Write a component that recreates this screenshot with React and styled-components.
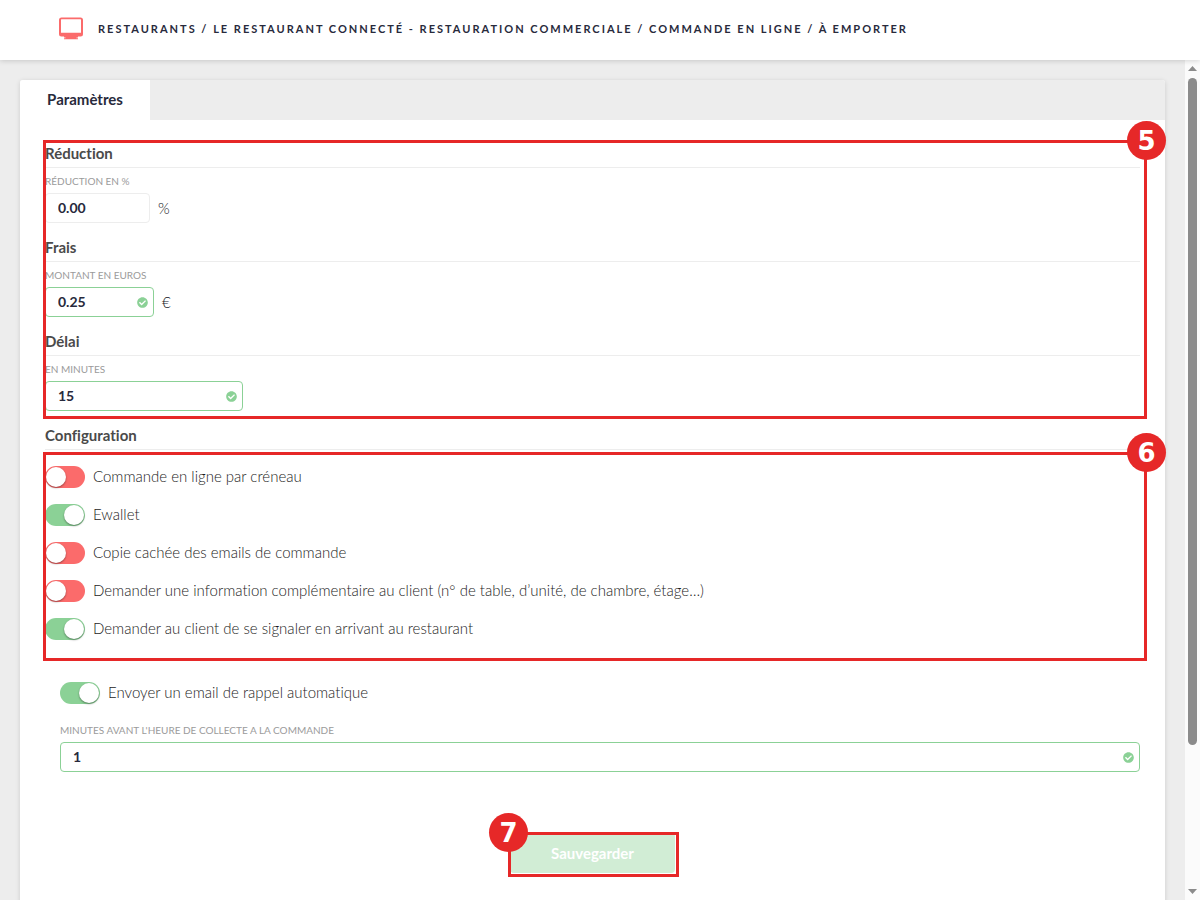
import React, { useState } from "react";
import styled, { createGlobalStyle } from "styled-components";
import { FaCheckCircle } from "react-icons/fa";

const GlobalStyle = createGlobalStyle`
    *, *::before, *::after {
        box-sizing: border-box;
    }
    body {
        margin: 0;
        background: #ededed;
        color: #282a3c;
        font-family: Lato, "Liberation Sans", sans-serif;
        font-size: 15px;
        font-variant-ligatures: none;
    }
    button, input {
        font-family: inherit;
    }
`;

const Page = styled.div`
    display: flex;
    flex-direction: column;
    height: 100vh;
`;
const Header = styled.header`
    position: relative;
    z-index: 1;
    flex: none;
    display: flex;
    align-items: center;
    gap: 14px;
    height: 60px;
    padding: 0 58px 3px;
    background: #fff;
    box-shadow: 0 1px 5px rgba(0, 0, 0, 0.16);
`;
const Breadcrumb = styled.h1`
    margin: 0;
    font-size: 11px;
    line-height: 16px;
    font-weight: 700;
    letter-spacing: 2px;
    text-transform: uppercase;
    white-space: nowrap;
`;
const Body = styled.div`
    flex: 1;
    display: flex;
    min-height: 0;
`;
const Main = styled.main`
    flex: 1;
    min-width: 0;
    padding: 20px;
    overflow: hidden;
`;
const Card = styled.div`
    background: #fff;
    border-radius: 3px;
    box-shadow: 0 1px 5px rgba(0, 0, 0, 0.14);
`;
const Tabs = styled.div`
    display: flex;
    height: 40px;
    background: #ededed;
    border-radius: 3px 3px 0 0;
`;
const Tab = styled.button`
    min-width: 130px;
    padding: 0 20px 2px;
    border: 0;
    border-radius: 3px 0 0 0;
    background: #fff;
    color: #282a3c;
    font-size: 15px;
    font-weight: 700;
`;
const Form = styled.form`
    padding: 20px 25px 60px;
`;
const Group = styled.div`
    position: relative;
`;
const Toggles = styled(Group)`
    padding: 8px 0 13px;
`;
const Section = styled.section`
    padding-bottom: 11px;
`;
const SectionTitle = styled.h2`
    margin: 0;
    height: 28px;
    border-bottom: 1px solid #ededed;
    color: #4a4a4a;
    font-size: 15px;
    line-height: 26px;
    font-weight: 700;
`;
const FieldLabel = styled.label`
    display: block;
    margin: 6px 0 5px;
    color: #9b9b9b;
    font-size: 10px;
    line-height: 14px;
    text-transform: uppercase;
`;
const FieldRow = styled.div`
    display: flex;
    align-items: center;
    gap: 8px;
`;
const Unit = styled.span`
    padding-bottom: 1px;
    color: #14151e;
    font-weight: 300;
`;
const InputBox = styled.div`
    display: flex;
    align-items: center;
    width: ${props => props.$width || "100%"};
    height: 30px;
    padding: 0 5px 0 12px;
    border: 1px solid ${props => (props.$valid ? "#8bd196" : "#ededed")};
    border-radius: 4px;
    background: #fff;
    color: #8bd196;
`;
const Input = styled.input`
    flex: 1;
    min-width: 0;
    height: 20px;
    padding: 0 0 2px;
    border: 0;
    outline: 0;
    background: transparent;
    color: #282a3c;
    font-size: 14px;
    font-weight: 700;
`;
const ToggleRow = styled.label`
    display: flex;
    align-items: center;
    gap: 8px;
    height: 38px;
    color: #1c1c1c;
    font-weight: 300;
    cursor: pointer;
`;
const ToggleText = styled.span`
    padding-bottom: 2px;
`;
const Switch = styled.input`
    appearance: none;
    display: flex;
    flex: none;
    width: 40px;
    height: 22px;
    margin: 0;
    padding: 1px;
    border-radius: 11px;
    background: #fb6b6b;
    cursor: pointer;

    &::before {
        content: "";
        width: 20px;
        height: 20px;
        border-radius: 50%;
        background: #fff;
        box-shadow: 0 1px 2px rgba(0, 0, 0, 0.4);
    }
    &:checked {
        justify-content: flex-end;
        background: #8bd196;
    }
`;
const Reminder = styled.div`
    padding: 13px 0 0 15px;

    ${FieldLabel} {
        margin-top: 11px;
    }
`;
const Actions = styled.div`
    display: flex;
    justify-content: center;
    padding-top: 61px;
`;
const SaveButton = styled.button`
    display: block;
    width: 165px;
    height: 40px;
    padding: 0 0 1px;
    border: 0;
    border-radius: 4px;
    background: #d1edd5;
    color: #fff;
    font-size: 15px;
    font-weight: 700;
`;
const Frame = styled.div`
    position: absolute;
    inset: ${props => props.$inset};
    border: 3px solid #e62828;
    pointer-events: none;
`;
const Badge = styled.span`
    position: absolute;
    top: -22px;
    ${props => props.$side}: -22px;
    display: flex;
    align-items: center;
    justify-content: center;
    width: 39px;
    height: 39px;
    border-radius: 50%;
    background: #e62828;
    color: #fff;
    font-family: "DejaVu Sans", sans-serif;
    font-size: 26px;
    line-height: 28px;
    font-weight: 700;
`;
const ScrollBar = styled.div`
    flex: none;
    display: flex;
    flex-direction: column;
    align-items: center;
    width: 15px;
    padding: 6px 0;
    background: #fbfbfb;
`;
const Track = styled.div`
    flex: 1;
    width: 9px;
    margin: 7px 0;
`;
const Thumb = styled.div`
    height: 83%;
    border-radius: 5px;
    background: #8b8b8b;
`;

const toggles = [
    { label: "Commande en ligne par créneau", on: false },
    { label: "Ewallet", on: true },
    { label: "Copie cachée des emails de commande", on: false },
    { label: "Demander une information complémentaire au client (n° de table, d’unité, de chambre, étage…)", on: false },
    { label: "Demander au client de se signaler en arrivant au restaurant", on: true },
];

function ScreenIcon(){
    return(
        <svg width="26" height="24" viewBox="0 0 26 24" fill="none" aria-hidden="true">
            <path
                fill="#fb6b6b"
                fillRule="evenodd"
                d="M3.5 .5h19A2.5 2.5 0 0 1 25 3v14a2.500 2.500 0 0 1-2.500 2.500H20v1h-1.500v.800H20v1H6v-1h1.500v-.800H6v-1H3.500A2.500 2.500 0 0 1 1 17V3A2.500 2.500 0 0 1 3.500 .5zM3.500 2.200a.5.5 0 0 0-.5.5V15.700h20V2.700a.5.5 0 0 0-.5-.5z"
            />
        </svg>
    );
}

function Arrow({ down }){
    return(
        <svg width="9" height="5" viewBox="0 0 9 5" aria-hidden="true">
            <path fill="#8b8b8b" d={down ? "M0 0h9L4.500 5z" : "M0 5h9L4.500 0z"}/>
        </svg>
    );
}

function Field({ id, label, value, width, unit, valid }){
    return(
        <>
            <FieldLabel htmlFor={id}>{label}</FieldLabel>
            <FieldRow>
                <InputBox $width={width} $valid={valid}>
                    <Input id={id} type="text" defaultValue={value}/>
                    {valid && <FaCheckCircle size={11}/>}
                </InputBox>
                {unit && <Unit>{unit}</Unit>}
            </FieldRow>
        </>
    );
}

function Toggle({ label, on }){
    const [checked, setChecked] = useState(on);
    return(
        <ToggleRow>
            <Switch type="checkbox" checked={checked} onChange={() => setChecked(!checked)}/>
            <ToggleText>{label}</ToggleText>
        </ToggleRow>
    );
}

function App(){
    return(
        <Page>
            <GlobalStyle/>
            <Header>
                <ScreenIcon/>
                <Breadcrumb>
                    Restaurants / Le restaurant connecté - Restauration commerciale / Commande en ligne / À emporter
                </Breadcrumb>
            </Header>
            <Body>
                <Main>
                    <Card>
                        <Tabs>
                            <Tab type="button">Paramètres</Tab>
                        </Tabs>
                        <Form onSubmit={e => e.preventDefault()}>
                            <Group>
                                <Section>
                                    <SectionTitle>Réduction</SectionTitle>
                                    <Field id="reduction" label="Réduction en %" value="0.00" width="105px" unit="%"/>
                                </Section>
                                <Section>
                                    <SectionTitle>Frais</SectionTitle>
                                    <Field id="frais" label="Montant en euros" value="0.25" width="109px" unit="€" valid/>
                                </Section>
                                <Section>
                                    <SectionTitle>Délai</SectionTitle>
                                    <Field id="delai" label="En minutes" value="15" width="198px" valid/>
                                </Section>
                                <Frame $inset="0 -7px 3px -2px">
                                    <Badge $side="right">5</Badge>
                                </Frame>
                            </Group>
                            <SectionTitle>Configuration</SectionTitle>
                            <Toggles>
                                {toggles.map(item => (
                                    <Toggle key={item.label} {...item}/>
                                ))}
                                <Frame $inset="2px -7px 0 -2px">
                                    <Badge $side="right">6</Badge>
                                </Frame>
                            </Toggles>
                            <Reminder>
                                <Toggle label="Envoyer un email de rappel automatique" on/>
                                <Field id="rappel" label="Minutes avant l'heure de collecte a la commande" value="1" valid/>
                            </Reminder>
                            <Actions>
                                <Group>
                                    <SaveButton type="submit">Sauvegarder</SaveButton>
                                    <Frame $inset="-1px -4px -4px -2px">
                                        <Badge $side="left">7</Badge>
                                    </Frame>
                                </Group>
                            </Actions>
                        </Form>
                    </Card>
                </Main>
                <ScrollBar>
                    <Arrow/>
                    <Track>
                        <Thumb/>
                    </Track>
                    <Arrow down/>
                </ScrollBar>
            </Body>
        </Page>
    );
}
export default App;
